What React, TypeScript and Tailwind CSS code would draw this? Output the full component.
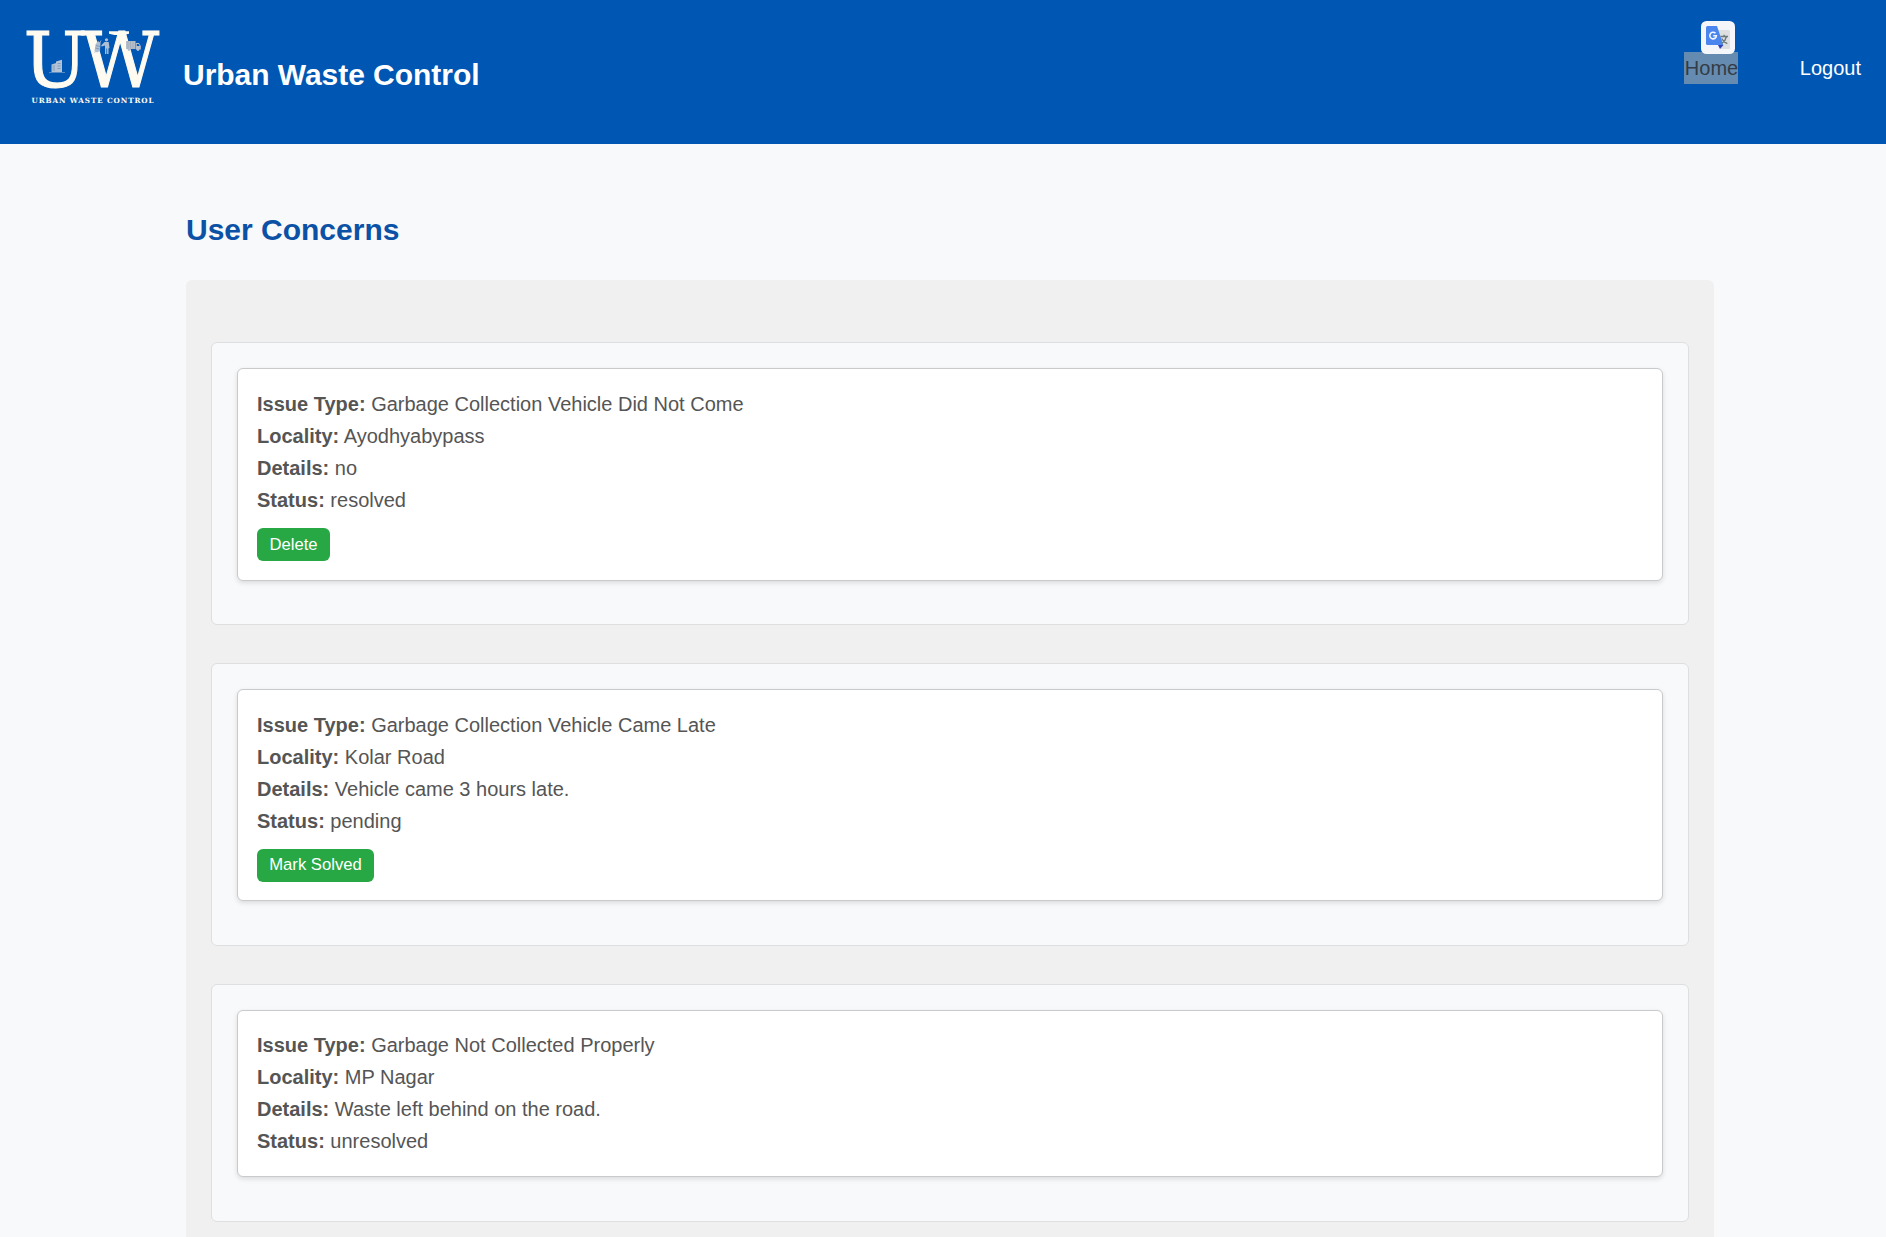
type Concern = {
  issue: string;
  locality: string;
  details: string;
  status: string;
  action?: string;
  outer: string;
  inner: string;
  button?: string;
};

const concerns: Concern[] = [
  {
    issue: 'Garbage Collection Vehicle Did Not Come',
    locality: 'Ayodhyabypass',
    details: 'no',
    status: 'resolved',
    action: 'Delete',
    outer: 'h-[283px]',
    inner: 'h-[213px] pt-[19px]',
    button: 'w-[73px]',
  },
  {
    issue: 'Garbage Collection Vehicle Came Late',
    locality: 'Kolar Road',
    details: 'Vehicle came 3 hours late.',
    status: 'pending',
    action: 'Mark Solved',
    outer: 'h-[283px]',
    inner: 'h-[212px] pt-[19px]',
    button: 'w-[117px] pb-[2px]',
  },
  {
    issue: 'Garbage Not Collected Properly',
    locality: 'MP Nagar',
    details: 'Waste left behind on the road.',
    status: 'unresolved',
    outer: 'h-[238px]',
    inner: 'h-[167px] pt-[18px]',
  },
];

function Logo() {
  return (
    <svg width="145" height="94" viewBox="20 20 145 94" overflow="visible" className="mt-5 ml-5 shrink-0">
      <g fill="#fffbf0" fontFamily="'DejaVu Serif', serif">
        <text x="23.500" y="87" fontSize="76" letterSpacing="-6.500" stroke="#fffbf0" strokeWidth="1">UW</text>
        <path d="M109 31.200h20v2.600l-5.500 1.200h-9l-5.500-1.200z" />
        <text x="31.500" y="102.600" fontSize="7.200" fontWeight="bold" textLength="122">URBAN WASTE CONTROL</text>
      </g>
      {/* buildings */}
      <g fill="#b4c3d6">
        <path d="M51.500 64.500l4.500-1.500v9h-4.500zM56 61.500l6-1.800V72h-6z" />
        <path d="M49 72h16v.7H49z" opacity=".7" />
        <path d="M52.500 66h2.500M52.500 68h2.500M52.500 70h2.500M57.500 63.500h3.200M57.500 66h3.200M57.500 68.500h3.200" stroke="#6f8fb4" strokeWidth=".7" />
      </g>
      {/* worker with bin */}
      <g fill="#aebfd4">
        <path d="M95.500 44.500l2.500-3.500 2.500 2-.5 8-3 1.500-2.500-1.500z" />
        <path d="M94.500 53l6.500-12.500" stroke="#aebfd4" strokeWidth=".8" />
        <circle cx="106.500" cy="39.800" r="1.600" />
        <path d="M104.500 42h4.200l.8 6-1 .5V54h-1.400v-5.500h-.7V54H105v-8.500l-3.500 1-.3-1z" />
        <path d="M96 45.500l4 1M95.500 48l4 1" stroke="#5f7f9f" strokeWidth=".6" />
      </g>
      {/* truck */}
      <g fill="#b5bfcb">
        <path d="M126 41h9.500v8H126zM135.900 43h3l1.900 3v3.500h-4.900z" />
        <path d="M128 41v8M130.500 41v8M133 41v8" stroke="#98a4b2" strokeWidth=".6" />
        <circle cx="129" cy="49.500" r="1.400" />
        <circle cx="138" cy="49.500" r="1.400" />
        <path d="M136.800 44h1.800l1 2h-2.800z" fill="#0056b3" />
      </g>
    </svg>
  );
}

function TranslateIcon() {
  return (
    <svg width="34" height="33" viewBox="0 0 34 33" className="absolute -top-[31px] left-[17px]">
      <rect width="34" height="33" rx="5.500" fill="#f5f6f9" />
      <path d="M14 9h13.500a1.500 1.500 0 0 1 1.500 1.500V26.500a1.500 1.500 0 0 1-1.500 1.500H20z" fill="#dedfe1" />
      <path d="M17 24h5.500L19 28z" fill="#3541b5" />
      <path d="M6.500 5H16l6.300 19H6.500A1.500 1.500 0 0 1 5 22.500v-16A1.500 1.500 0 0 1 6.500 5z" fill="#4a86ee" />
      <path d="M14.500 12.300a3.300 3.300 0 1 0 .9 2.400h-3.200" fill="none" stroke="#f2f6ff" strokeWidth="1.600" />
      <path d="M19.500 15.500h7.500M23.100 13.800v1.700M25.500 15.500c-.6 3-2.600 5.300-4.600 6.800M20.700 17.500c1 2.200 3 4 5.600 5.200" fill="none" stroke="#68787c" strokeWidth="1.300" />
    </svg>
  );
}

function Row({ label, value }: { label: string; value: string }) {
  return (
    <p className="whitespace-nowrap">
      <strong className="font-bold">{label}:</strong> {value}
    </p>
  );
}

export default function App() {
  return (
    <div className="h-[1237px] overflow-hidden bg-[#f8f9fb] font-['Liberation_Sans',Arial,sans-serif] text-xl leading-8 text-[#555]">
      <header className="flex h-36 justify-between bg-[#0056b3] pr-[25px]">
        <div className="flex">
          <Logo />
          <h1 className="mt-[55px] ml-[18px] text-[30px] leading-10 font-bold tracking-[-0.04px] whitespace-nowrap text-white">Urban Waste Control</h1>
        </div>
        <nav className="mt-[52px] flex items-start gap-[62px] text-white">
          <div className="relative">
            <a className="block w-[54px] bg-[#668bb0] pl-px text-[#333c46]">Home</a>
            <TranslateIcon />
          </div>
          <a className="block">Logout</a>
        </nav>
      </header>
      <main className="mx-auto w-[1528px] translate-x-[7px] pt-[66px]">
        <h2 className="text-[30px] leading-10 font-bold text-[#0b51a6]">User Concerns</h2>
        <section className="mt-[30px] flex flex-col gap-[38px] rounded-md bg-[#f0f0f0] px-[25px] pt-[62px] pb-10">
          {concerns.map((c) => (
            <div key={c.issue} className={`shrink-0 rounded-md border border-[#dddfe1] bg-[#f8f9fb] px-[25px] pt-[25px] ${c.outer}`}>
              <article className={`rounded-md border border-[#c9cacb] bg-white px-[19px] shadow-[0_2px_5px_rgba(0,0,0,0.12)] ${c.inner}`}>
                <Row label="Issue Type" value={c.issue} />
                <Row label="Locality" value={c.locality} />
                <Row label="Details" value={c.details} />
                <Row label="Status" value={c.status} />
                {c.action && (
                  <button className={`mt-3 flex h-[33px] items-center justify-center rounded-md bg-[#28a745] text-[16.67px] leading-5 whitespace-nowrap text-white ${c.button}`}>
                    {c.action}
                  </button>
                )}
              </article>
            </div>
          ))}
        </section>
      </main>
    </div>
  );
}
